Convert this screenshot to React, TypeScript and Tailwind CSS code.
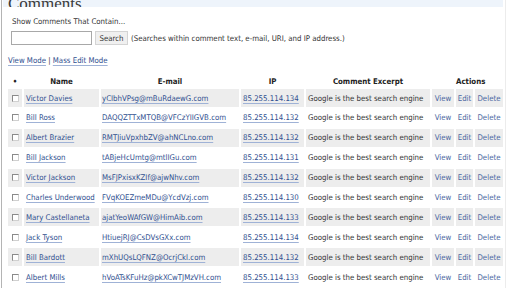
import React from 'react';

type Row = { name: string; email: string; ip: string };

const rows: Row[] = [
  { name: 'Victor Davies', email: 'yCIbhVPsg@mBuRdaewG.com', ip: '85.255.114.134' },
  { name: 'Bill Ross', email: 'DAQQZTTxMTQB@VFCzYIIGVB.com', ip: '85.255.114.132' },
  { name: 'Albert Brazier', email: 'RMTJiuVpxhbZV@ahNCLno.com', ip: '85.255.114.132' },
  { name: 'Bill Jackson', email: 'tABjeHcUmtg@mtlIGu.com', ip: '85.255.114.131' },
  { name: 'Victor Jackson', email: 'MsFJPxisxKZIf@ajwNhv.com', ip: '85.255.114.132' },
  { name: 'Charles Underwood', email: 'FVqKOEZmeMDu@YcdVzj.com', ip: '85.255.114.130' },
  { name: 'Mary Castellaneta', email: 'ajatYeoWAfGW@HimAib.com', ip: '85.255.114.133' },
  { name: 'Jack Tyson', email: 'HtiuejRJ@CsDVsGXx.com', ip: '85.255.114.134' },
  { name: 'Bill Bardott', email: 'mXhUQsLQFNZ@OcrjCkl.com', ip: '85.255.114.132' },
  { name: 'Albert Mills', email: 'hVoATsKFuHz@pkXCwTJMzVH.com', ip: '85.255.114.133' },
];

const link = 'text-[#2f4f8f] underline decoration-[#9fb2d6] underline-offset-[2px]';

export default function App() {
  return (
    <div
      className="w-[512px] h-[288px] overflow-hidden bg-white flex text-[#333] text-[7.8px] leading-[11px]"
      style={{ fontFamily: '"DejaVu Sans Condensed", "DejaVu Sans", sans-serif' }}
    >
      <div className="w-[1px]" />
      <div className="w-[1px] bg-[#b4b4b4]" />
      <div className="w-[1px]" />

      <div className="w-[500px] flex flex-col">
        {/* heading band, title cropped at the top as in the page */}
        <div className="h-[11px] overflow-hidden bg-[#eef4fb] pl-[5px]">
          <h1
            className="-mt-[5px] text-[17px] leading-[17px] text-[#3a3a3a]"
            style={{ fontFamily: '"Liberation Serif", serif' }}
          >
            Comments
          </h1>
        </div>

        {/* search */}
        <div className="mt-[9px] pl-[9px]">Show Comments That Contain...</div>
        <div className="mt-[4px] flex items-center pl-[8px] h-[14px]">
          <div className="w-[81px] h-[14px] border border-[#a8a8a8] bg-white" />
          <button className="ml-[3px] w-[33px] h-[14px] bg-[#f0f0f0] border border-[#d4d4d4] text-[#333]">
            Search
          </button>
          <span className="ml-[3px]">(Searches within comment text, e-mail, URI, and IP address.)</span>
        </div>

        <div className="mt-[10px] pl-[5px]">
          <span className={link}>View Mode</span> | <span className={link}>Mass Edit Mode</span>
        </div>

        {/* table */}
        <table className="mt-[7px] ml-[3px] w-[499px] table-fixed border-separate border-spacing-[2px]">
          <thead>
            <tr className="h-[12px] font-bold text-[#222]">
              <th className="w-[14px] font-bold">•</th>
              <th className="w-[75px]">Name</th>
              <th className="w-[138px]">E-mail</th>
              <th className="w-[63px]">IP</th>
              <th className="w-[124px]">Comment Excerpt</th>
              <th className="w-[22px]" />
              <th className="w-[17px] whitespace-nowrap">Actions</th>
              <th className="w-[28px]" />
            </tr>
          </thead>
          <tbody>
            {rows.map((r, i) => {
              const bg = i % 2 === 0 ? 'bg-[#ededed]' : 'bg-white';
              return (
                <tr key={r.name} className="h-[17.9px]">
                  <td className={`${bg} pl-[4px]`}>
                    <span className="block w-[7px] h-[7px] bg-white border border-[#8a8a8a] border-r-[#d0d0d0] border-b-[#d0d0d0]" />
                  </td>
                  <td className={`${bg} pl-[2px] whitespace-nowrap`}>
                    <span className={link}>{r.name}</span>
                  </td>
                  <td className={`${bg} pl-[1px] whitespace-nowrap`}>
                    <span className={link}>{r.email}</span>
                  </td>
                  <td className={`${bg} pl-[2px] whitespace-nowrap`}>
                    <span className={link}>{r.ip}</span>
                  </td>
                  <td className={`${bg} pl-[2px] whitespace-nowrap`}>Google is the best search engine</td>
                  <td className={`${bg} text-center text-[#4a66a0]`}>View</td>
                  <td className={`${bg} text-center text-[#4a66a0]`}>Edit</td>
                  <td className={`${bg} text-center text-[#4a66a0]`}>Delete</td>
                </tr>
              );
            })}
          </tbody>
        </table>
      </div>

      <div className="w-[2px]" />
      <div className="w-[1px] bg-[#ececec]" />
    </div>
  );
}
